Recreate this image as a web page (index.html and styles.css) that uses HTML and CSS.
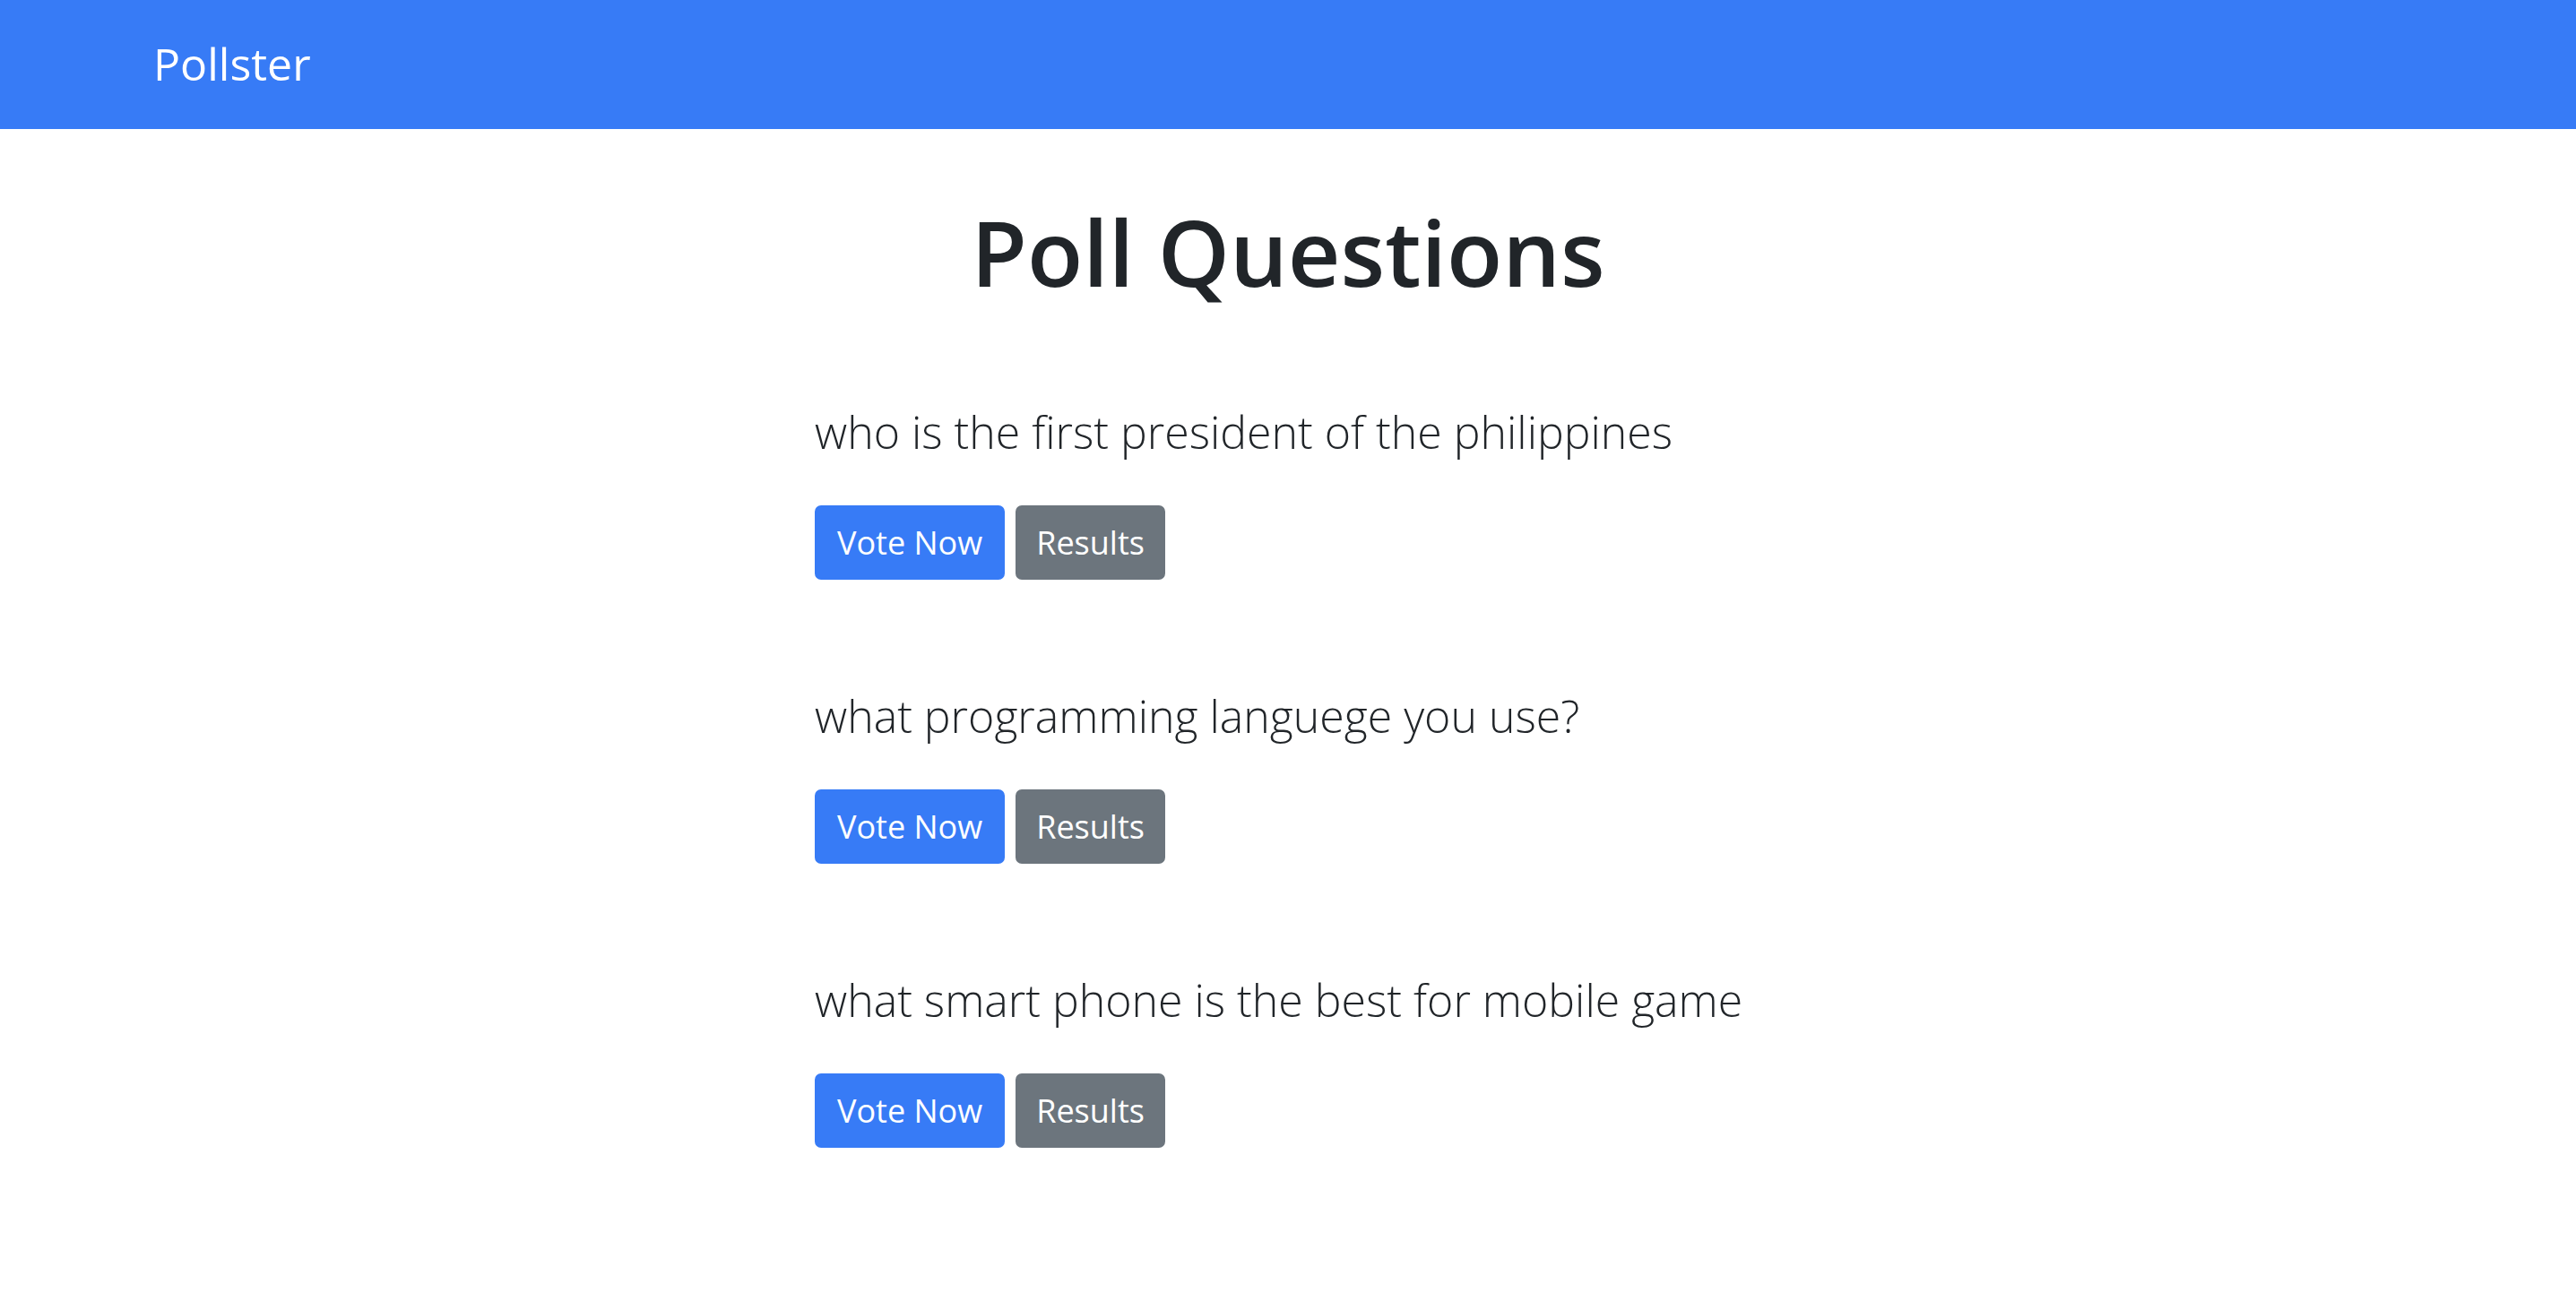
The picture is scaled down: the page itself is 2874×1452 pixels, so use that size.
FILE: index.html
```html
<!DOCTYPE html>
<html lang="en">
<head>
<meta charset="utf-8">
<title>Pollster</title>
<link rel="stylesheet" href="styles.css">
</head>
<body>
<nav class="navbar">
  <a class="brand" href="#">Pollster</a>
</nav>
<main class="container">
  <h1 class="title">Poll Questions</h1>
  <ul class="polls">
    <li class="poll">
      <p class="question">who is the first president of the philippines</p>
      <div class="actions">
        <a class="btn btn-primary" href="#">Vote Now</a>
        <a class="btn btn-secondary" href="#">Results</a>
      </div>
    </li>
    <li class="poll">
      <p class="question">what programming languege you use?</p>
      <div class="actions">
        <a class="btn btn-primary" href="#">Vote Now</a>
        <a class="btn btn-secondary" href="#">Results</a>
      </div>
    </li>
    <li class="poll">
      <p class="question">what smart phone is the best for mobile game</p>
      <div class="actions">
        <a class="btn btn-primary" href="#">Vote Now</a>
        <a class="btn btn-secondary" href="#">Results</a>
      </div>
    </li>
  </ul>
</main>
</body>
</html>
```

FILE: styles.css
```css
* {
  box-sizing: border-box;
}

html, body {
  margin: 0;
  padding: 0;
  background: #ffffff;
}

body {
  font-family: "Open Sans", "Noto Sans", "Liberation Sans", sans-serif;
  color: #212529;
}

.navbar {
  height: 144px;
  background: #377bf6;
  display: flex;
  align-items: center;
  padding-left: 171px;
}

.brand {
  color: #ffffff;
  text-decoration: none;
  font-size: 50px;
  line-height: 1.5;
  font-weight: 400;
  position: relative;
  top: -1px;
}

.container {
  width: 1056px;
  margin: 0 auto;
  padding-top: 76px;
}

.title {
  margin: 0 0 101px 0;
  text-align: center;
  font-size: 102px;
  line-height: 1.2;
  font-weight: 600;
  color: #212529;
}

.polls {
  list-style: none;
  margin: 0;
  padding: 0;
  display: flex;
  flex-direction: column;
  gap: 113px;
}

.poll {
  display: flex;
  flex-direction: column;
  gap: 43px;
}

.question {
  margin: 0;
  font-size: 50px;
  line-height: 78px;
  font-weight: 300;
  color: #212529;
}

.actions {
  display: flex;
  gap: 12px;
}

.btn {
  display: inline-block;
  height: 83px;
  padding: 0 23px;
  border: 2px solid transparent;
  border-radius: 7px;
  font-size: 36px;
  line-height: 79px;
  font-weight: 400;
  color: #ffffff;
  text-decoration: none;
}

.btn-primary {
  background: #377bf6;
  border-color: #377bf6;
}

.btn-secondary {
  background: #6c757d;
  border-color: #6c757d;
  padding: 0 21px;
}
```
